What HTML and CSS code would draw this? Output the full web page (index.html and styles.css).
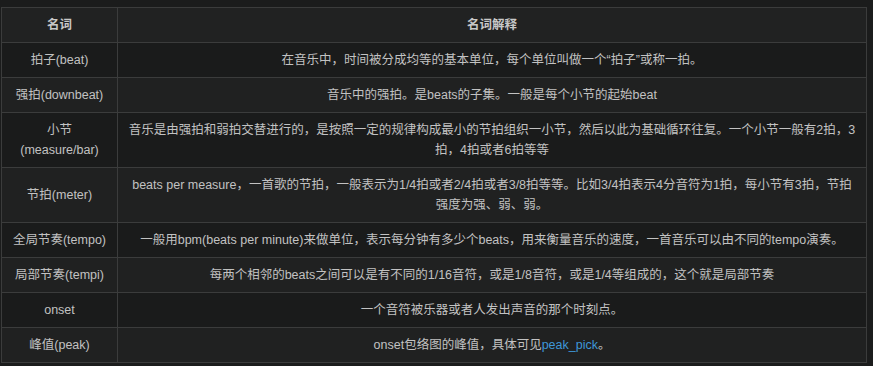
FILE: index.html
```html
<!DOCTYPE html>
<html lang="zh">
<head>
<meta charset="utf-8">
<link rel="stylesheet" href="styles.css">
</head>
<body>
<div class="wrap">
<table class="terms">
<thead>
<tr><th class="c1">名词</th><th>名词解释</th></tr>
</thead>
<tbody>
<tr><td class="c1">拍子(beat)</td><td>在音乐中，时间被分成均等的基本单位，每个单位叫做一个“拍子”或称一拍。</td></tr>
<tr><td class="c1">强拍(downbeat)</td><td>音乐中的强拍。是beats的子集。一般是每个小节的起始beat</td></tr>
<tr><td class="c1">小节(measure/bar)</td><td>音乐是由强拍和弱拍交替进行的，是按照一定的规律构成最小的节拍组织一小节，然后以此为基础循环往复。一个小节一般有2拍，3拍，4拍或者6拍等等</td></tr>
<tr><td class="c1">节拍(meter)</td><td>beats per measure，一首歌的节拍，一般表示为1/4拍或者2/4拍或者3/8拍等等。比如3/4拍表示4分音符为1拍，每小节有3拍，节拍强度为强、弱、弱。</td></tr>
<tr><td class="c1">全局节奏(tempo)</td><td>一般用bpm(beats per minute)来做单位，表示每分钟有多少个beats，用来衡量音乐的速度，一首音乐可以由不同的tempo演奏。</td></tr>
<tr><td class="c1">局部节奏(tempi)</td><td>每两个相邻的beats之间可以是有不同的1/16音符，或是1/8音符，或是1/4等组成的，这个就是局部节奏</td></tr>
<tr><td class="c1">onset</td><td>一个音符被乐器或者人发出声音的那个时刻点。</td></tr>
<tr><td class="c1">峰值(peak)</td><td>onset包络图的峰值，具体可见<a class="link" href="#">peak_pick</a>。</td></tr>
</tbody>
</table>
</div>
</body>
</html>
```
FILE: styles.css
```css
html, body {
  margin: 0;
  padding: 0;
  background: #1b1c1c;
}
.wrap {
  padding: 7px 0 0 1px;
}
.terms {
  border-collapse: collapse;
  width: 866px;
  font-family: "Liberation Sans", "Noto Sans CJK SC", sans-serif;
  font-size: 12.5px;
  line-height: 20px;
  color: #c2c2c2;
  table-layout: fixed;
}
.terms th, .terms td {
  border: 1px solid #3b3c3c;
  padding: 7px 8px;
  text-align: center;
  vertical-align: middle;
}
.terms th {
  font-weight: bold;
  background: #212222;
  color: #c8c8c8;
}
.terms .c1 {
  width: 99px;
}
.terms tbody tr:nth-child(odd) td {
  background: #1a1b1b;
}
.terms tbody tr:nth-child(even) td {
  background: #202121;
}
.link {
  color: #3e97d8;
  text-decoration: none;
}
```
